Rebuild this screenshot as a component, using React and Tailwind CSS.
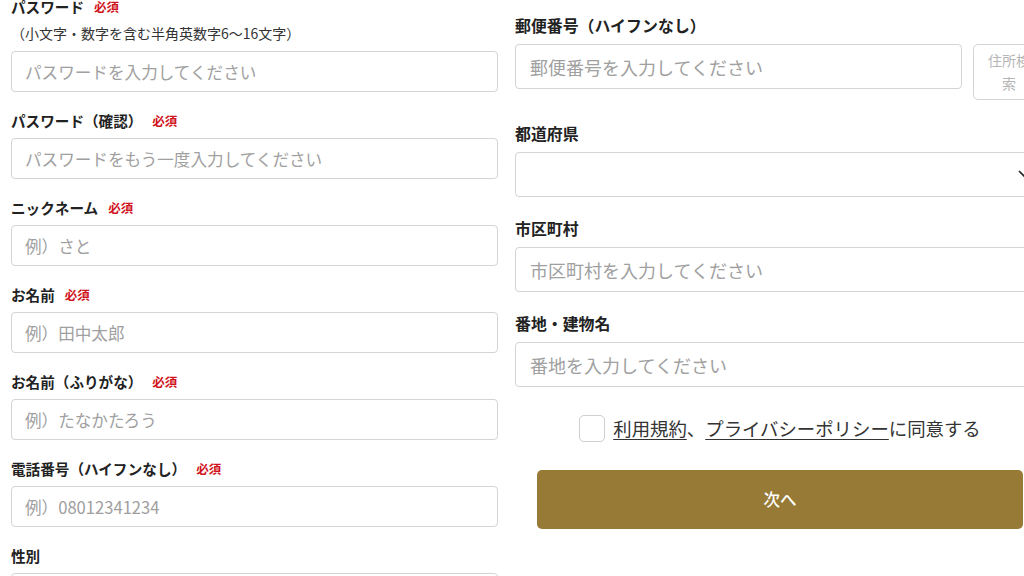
import React from 'react';

const Required = () => (
  <span className="ml-[10px] text-[12.5px] font-bold text-[#d0121b]">必須</span>
);

const LeftField = ({ label, required, placeholder, note, first }) => (
  <div className={first ? 'mt-[-3px]' : 'mt-[19px]'}>
    <div className="flex h-5 items-center text-[14.6px] font-bold text-[#222]">
      <span>{label}</span>
      {required && <Required />}
    </div>
    {note && (
      <div className="mt-[6px] mb-[8px] flex h-5 items-center text-[14px] text-[#333]">{note}</div>
    )}
    <input
      type="text"
      placeholder={placeholder}
      className={`${note ? '' : 'mt-[7px]'} block h-[41px] w-full rounded-[4px] border border-[#d4d4d4] bg-white px-[13px] text-[16.6px] text-[#333] outline-none placeholder:text-[#a0a0a0]`}
    />
  </div>
);

const RightLabel = ({ children }) => (
  <div className="mb-2 flex h-5 items-center text-[15.9px] font-bold text-[#222]">{children}</div>
);

const rightInput =
  'block h-[45px] w-full rounded-[4px] border border-[#d4d4d4] bg-white px-[14px] text-[18px] text-[#333] outline-none placeholder:text-[#a0a0a0]';

export default function App() {
  return (
    <div className="flex h-[576px] w-[1024px] overflow-hidden bg-white font-['Noto_Sans_CJK_JP','Noto_Sans',sans-serif]">
      {/* left column */}
      <div className="ml-[11px] w-[487px] shrink-0">
        <LeftField
          first
          label="パスワード"
          required
          note="（小文字・数字を含む半角英数字6〜16文字）"
          placeholder="パスワードを入力してください"
        />
        <LeftField label="パスワード（確認）" required placeholder="パスワードをもう一度入力してください" />
        <LeftField label="ニックネーム" required placeholder="例）さと" />
        <LeftField label="お名前" required placeholder="例）田中太郎" />
        <LeftField label="お名前（ふりがな）" required placeholder="例）たなかたろう" />
        <LeftField label="電話番号（ハイフンなし）" required placeholder="例）08012341234" />
        <LeftField label="性別" placeholder="" />
      </div>

      {/* right column */}
      <div className="ml-[17px] w-[530px] shrink-0 pt-4">
        <RightLabel>郵便番号（ハイフンなし）</RightLabel>
        <div className="flex items-start gap-[11px]">
          <input type="text" placeholder="郵便番号を入力してください" className={rightInput} />
          <button className="h-[56px] w-[72px] shrink-0 rounded-[5px] border border-[#d4d4d4] bg-white px-[10px] text-[14px] leading-[23px] text-[#b5b5b5]">
            住所検索
          </button>
        </div>

        <div className="mt-6">
          <RightLabel>都道府県</RightLabel>
          <div className="relative">
            <select className="block h-[45px] w-full appearance-none rounded-[4px] border border-[#d4d4d4] bg-white px-[14px] text-[18px] text-[#333] outline-none">
              <option></option>
            </select>
            <svg
              className="pointer-events-none absolute right-[12px] top-[18px]"
              width="15"
              height="9"
              viewBox="0 0 15 9"
              fill="none"
            >
              <path d="M1 1l6.5 6.5L14 1" stroke="#222" strokeWidth="1.6" />
            </svg>
          </div>
        </div>

        <div className="mt-[22px]">
          <RightLabel>市区町村</RightLabel>
          <input type="text" placeholder="市区町村を入力してください" className={rightInput} />
        </div>

        <div className="mt-[22px]">
          <RightLabel>番地・建物名</RightLabel>
          <input type="text" placeholder="番地を入力してください" className={rightInput} />
        </div>

        <label className="mt-[28px] flex h-[27px] items-center justify-center gap-[8px] text-[18.4px] text-[#333]">
          <span className="h-[27px] w-[26px] shrink-0 rounded-[5px] border border-[#cfcfcf] bg-white"></span>
          <span>
            <span className="underline underline-offset-[3px]">利用規約</span>、
            <span className="underline underline-offset-[3px]">プライバシーポリシー</span>に同意する
          </span>
        </label>

        <div className="mx-[22px] mt-[28px]">
          <button className="flex h-[59px] w-full items-center justify-center rounded-[5px] bg-[#967a36] text-[16.5px] font-medium text-white">
            次へ
          </button>
        </div>
      </div>
    </div>
  );
}
